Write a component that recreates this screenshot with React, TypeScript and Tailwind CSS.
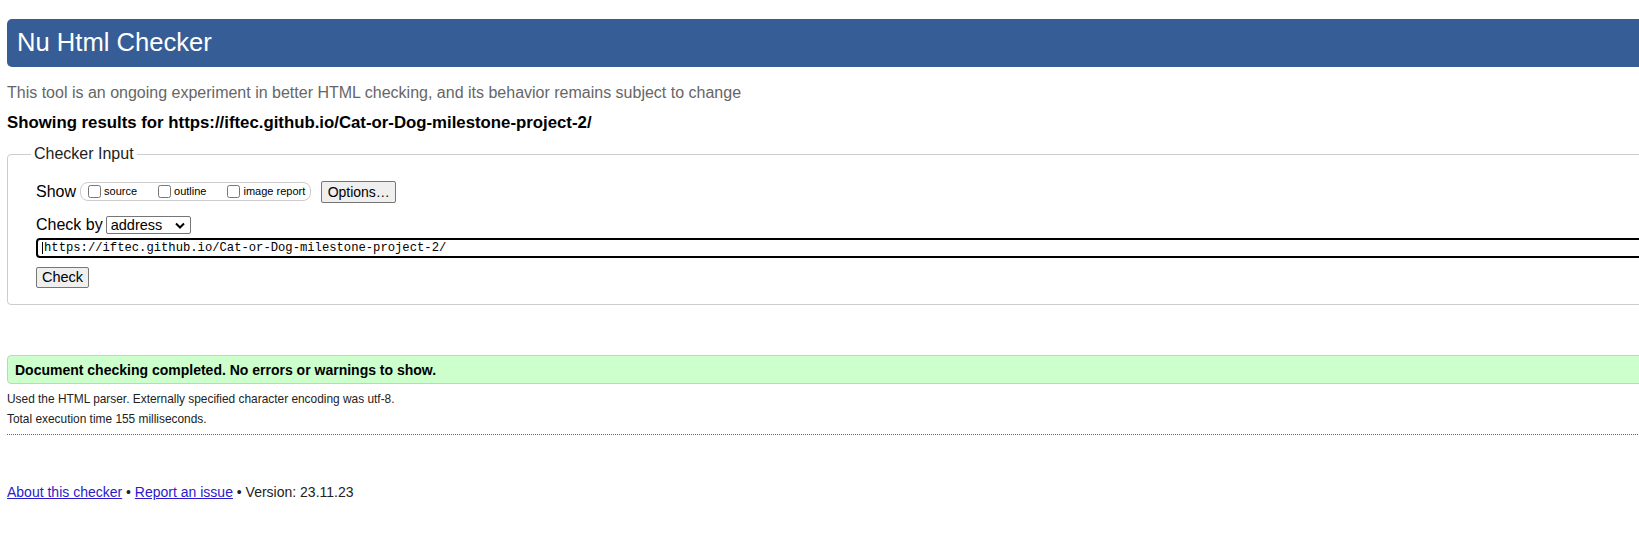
export default function App() {
  const options = ['source', 'outline', 'image report'];

  return (
    <div className="h-[535px] w-[1639px] overflow-hidden bg-white font-['Liberation_Sans',Arial,sans-serif] text-black">
      <div className="w-[1760px] pl-[7px] pt-[19px]">
        {/* Title bar */}
        <header className="flex h-[48px] items-center rounded-l-[5px] bg-[#365d95] pl-[10px] text-[25.6px] leading-none text-white">
          Nu Html Checker
        </header>

        <p className="mt-[17px] text-[16px] leading-[18px] text-[#666]">
          This tool is an ongoing experiment in better HTML checking, and its behavior remains subject to change
        </p>
        <p className="mt-[12px] text-[16.8px] font-bold leading-[18px]">
          Showing results for https://iftec.github.io/Cat-or-Dog-milestone-project-2/
        </p>

        {/* Checker input form */}
        <fieldset className="mt-[13px] rounded-l-[4px] border border-[#ccc]">
          <legend className="ml-[23px] px-[3px] text-[16px] leading-[18px] text-[#222]">Checker Input</legend>
          <div className="pb-[16px] pl-[28px] pt-[18px]">
            <div className="flex h-[21px] items-center">
              <span className="text-[16px] leading-[18px]">Show</span>
              <div className="ml-[4px] flex h-[19px] items-center rounded-[8px] border border-[#ccc] pl-[3px] pr-[5px]">
                {options.map((opt, i) => (
                  <label key={opt} className={`flex items-center ${i > 0 ? 'ml-[17px]' : ''}`}>
                    <input type="checkbox" className="m-0 ml-[4px] mr-[3px] h-[13px] w-[13px]" />
                    <span className="text-[11px] leading-none">{opt}</span>
                  </label>
                ))}
              </div>
              <button className="ml-[10px] flex h-[22px] w-[75px] items-center justify-center rounded-[2px] border border-[#767676] bg-[#efefef] text-[14px] leading-none">
                Options…
              </button>
            </div>

            <div className="mt-[14px] flex h-[18px] items-center">
              <span className="text-[16px] leading-[18px]">Check by</span>
              <div className="ml-[3px] flex h-[18px] w-[85px] items-center justify-between rounded-[2px] border border-[#767676] pl-[4px] pr-[5px]">
                <span className="text-[14.5px] leading-none">address</span>
                <svg width="10" height="7" viewBox="0 0 10 7" fill="none">
                  <path d="M1 1.5l4 4 4-4" stroke="#000" strokeWidth="2" />
                </svg>
              </div>
            </div>

            <div className="mt-[4px] flex h-[20px] items-center rounded-l-[4px] border-2 border-black pl-[4px]">
              <span className="border-l border-black pl-px font-['Liberation_Mono',monospace] text-[12.2px] leading-none">
                https://iftec.github.io/Cat-or-Dog-milestone-project-2/
              </span>
            </div>

            <button className="mt-[9px] flex h-[21px] w-[53px] items-center justify-center rounded-[2px] border border-[#767676] bg-[#efefef] text-[14.5px] leading-none">
              Check
            </button>
          </div>
        </fieldset>

        {/* Result */}
        <div className="mt-[50px] flex h-[29px] items-center rounded-l-[4px] border border-[#ccc] bg-[#ccffcc] pl-[7px]">
          <span className="text-[14px] font-bold leading-none">Document checking completed. No errors or warnings to show.</span>
        </div>
        <p className="mt-[8px] text-[11.9px] leading-[15px] text-[#222]">
          Used the HTML parser. Externally specified character encoding was utf-8.
        </p>
        <p className="mt-[5px] text-[11.9px] leading-[15px] text-[#222]">Total execution time 155 milliseconds.</p>
        <div className="mt-[7px] border-t border-dotted border-[#666]" />

        {/* Footer */}
        <p className="mt-[49px] text-[14px] leading-[16px] text-[#222]">
          <a href="#" className="text-[#2a1acb] underline">About this checker</a>
          {' • '}
          <a href="#" className="text-[#2a1acb] underline">Report an issue</a>
          {' • Version: 23.11.23'}
        </p>
      </div>
    </div>
  );
}
